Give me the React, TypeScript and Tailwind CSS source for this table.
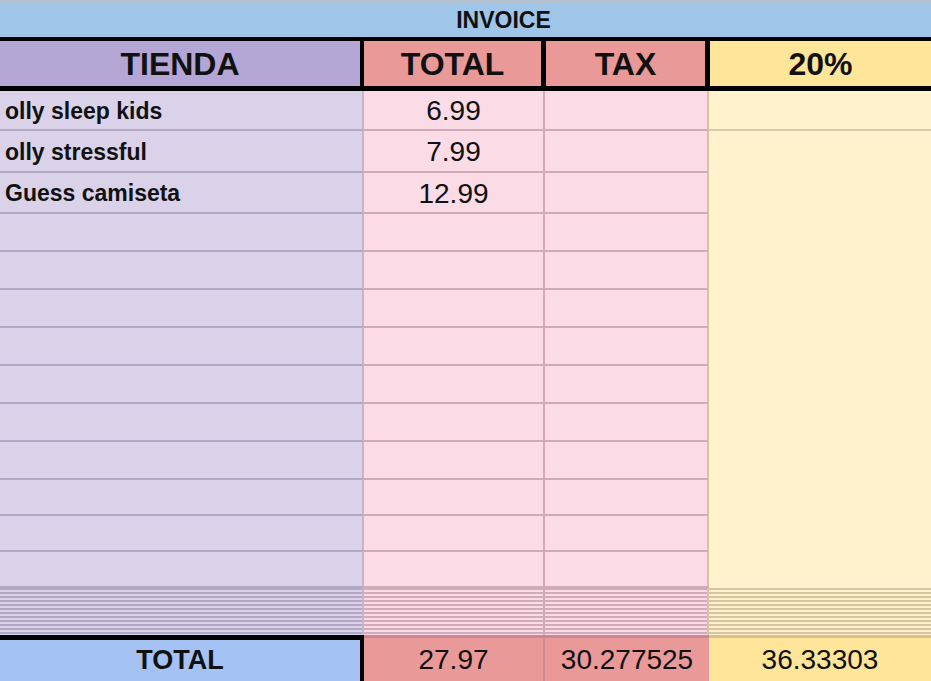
const rows = [
  { name: 'olly sleep kids', total: '6.99', h: 'h-[40px]' },
  { name: 'olly stressful', total: '7.99', h: 'h-[42px]' },
  { name: 'Guess camiseta', total: '12.99', h: 'h-[41px]' },
  { name: '', total: '', h: 'h-[38px]' },
  { name: '', total: '', h: 'h-[38px]' },
  { name: '', total: '', h: 'h-[38px]' },
  { name: '', total: '', h: 'h-[38px]' },
  { name: '', total: '', h: 'h-[38px]' },
  { name: '', total: '', h: 'h-[38px]' },
  { name: '', total: '', h: 'h-[38px]' },
  { name: '', total: '', h: 'h-[36px]' },
  { name: '', total: '', h: 'h-[36px]' },
  { name: '', total: '', h: 'h-[36px]' },
];

const stripes = Array.from({ length: 12 }, (_, i) => i);

function Stripes({ line, bg }: { line: string; bg: string }) {
  return (
    <div className={`h-[47px] overflow-hidden ${bg}`}>
      {stripes.map((i) => (
        <div key={i} className={`h-[4px] border-t-2 ${line}`} />
      ))}
    </div>
  );
}

export default function App() {
  return (
    <div
      className="w-[931px] h-[681px] overflow-hidden bg-white text-[#111]"
      style={{ fontFamily: '"Liberation Sans", Arial, sans-serif' }}
    >
      {/* title band */}
      <div className="h-[3px] bg-[#b3c0cf]" />
      <div className="h-[34px] bg-[#9fc5e8] flex items-center justify-center pl-[76px] text-[23px] font-bold leading-none">
        INVOICE
      </div>

      {/* header row */}
      <div className="flex h-[54px] border-t-4 border-b-[5px] border-black text-[32px] font-bold leading-none">
        <div className="w-[364px] border-r-4 border-black bg-[#b4a7d6] flex items-center justify-center">
          TIENDA
        </div>
        <div className="w-[182px] border-r-[5px] border-black bg-[#ea9999] flex items-center justify-center">
          TOTAL
        </div>
        <div className="w-[164px] border-r-[5px] border-black bg-[#ea9999] flex items-center justify-center">
          TAX
        </div>
        <div className="flex-1 bg-[#ffe599] flex items-center justify-center">20%</div>
      </div>

      {/* data rows */}
      {rows.map((r, i) => (
        <div key={i} className={`flex ${r.h}`}>
          <div className="w-[364px] border-r-2 border-b-2 border-r-[#c9b3c6] border-b-[#b0a8c4] bg-[#d9d2e9] flex items-center pl-[5px] pt-[2px] text-[23px] font-bold leading-none">
            {r.name}
          </div>
          <div className="w-[181px] border-r-2 border-b-2 border-[#d2a9b8] bg-[#fadbe6] flex items-center justify-center pt-[2px] text-[28px] leading-none">
            {r.total}
          </div>
          <div className="w-[164px] border-r-2 border-b-2 border-r-[#d8c3a0] border-b-[#d2a9b8] bg-[#fadbe6]" />
          <div className={`flex-1 bg-[#fff2cc] ${i === 0 ? 'border-b-2 border-[#dcc8a2]' : ''}`} />
        </div>
      ))}

      {/* collapsed rows */}
      <div className="flex">
        <div className="w-[364px] border-r-2 border-[#c9b3c6]">
          <Stripes line="border-[#b0a8c4]" bg="bg-[#d9d2e9]" />
        </div>
        <div className="w-[181px] border-r-2 border-[#d2a9b8]">
          <Stripes line="border-[#d3aab8]" bg="bg-[#fadbe6]" />
        </div>
        <div className="w-[164px] border-r-2 border-[#d8c3a0]">
          <Stripes line="border-[#d3aab8]" bg="bg-[#fadbe6]" />
        </div>
        <div className="flex-1">
          <Stripes line="border-[#d8c59f]" bg="bg-[#fff2cc]" />
        </div>
      </div>

      {/* totals */}
      <div className="flex h-[46px] text-[28px] leading-none">
        <div className="w-[364px] border-t-[5px] border-r-4 border-black bg-[#a4c2f4] flex items-center justify-center text-[27px] font-bold">
          TOTAL
        </div>
        <div className="w-[181px] border-t-[3px] border-r-2 border-t-[#c98791] border-r-[#cf8a8f] bg-[#ea9999] flex items-center justify-center">
          27.97
        </div>
        <div className="w-[164px] border-t-[3px] border-[#c98791] bg-[#ea9999] flex items-center justify-center">
          30.277525
        </div>
        <div className="flex-1 border-t-[3px] border-[#d6c08c] bg-[#ffe599] flex items-center justify-center">
          36.33303
        </div>
      </div>
    </div>
  );
}
